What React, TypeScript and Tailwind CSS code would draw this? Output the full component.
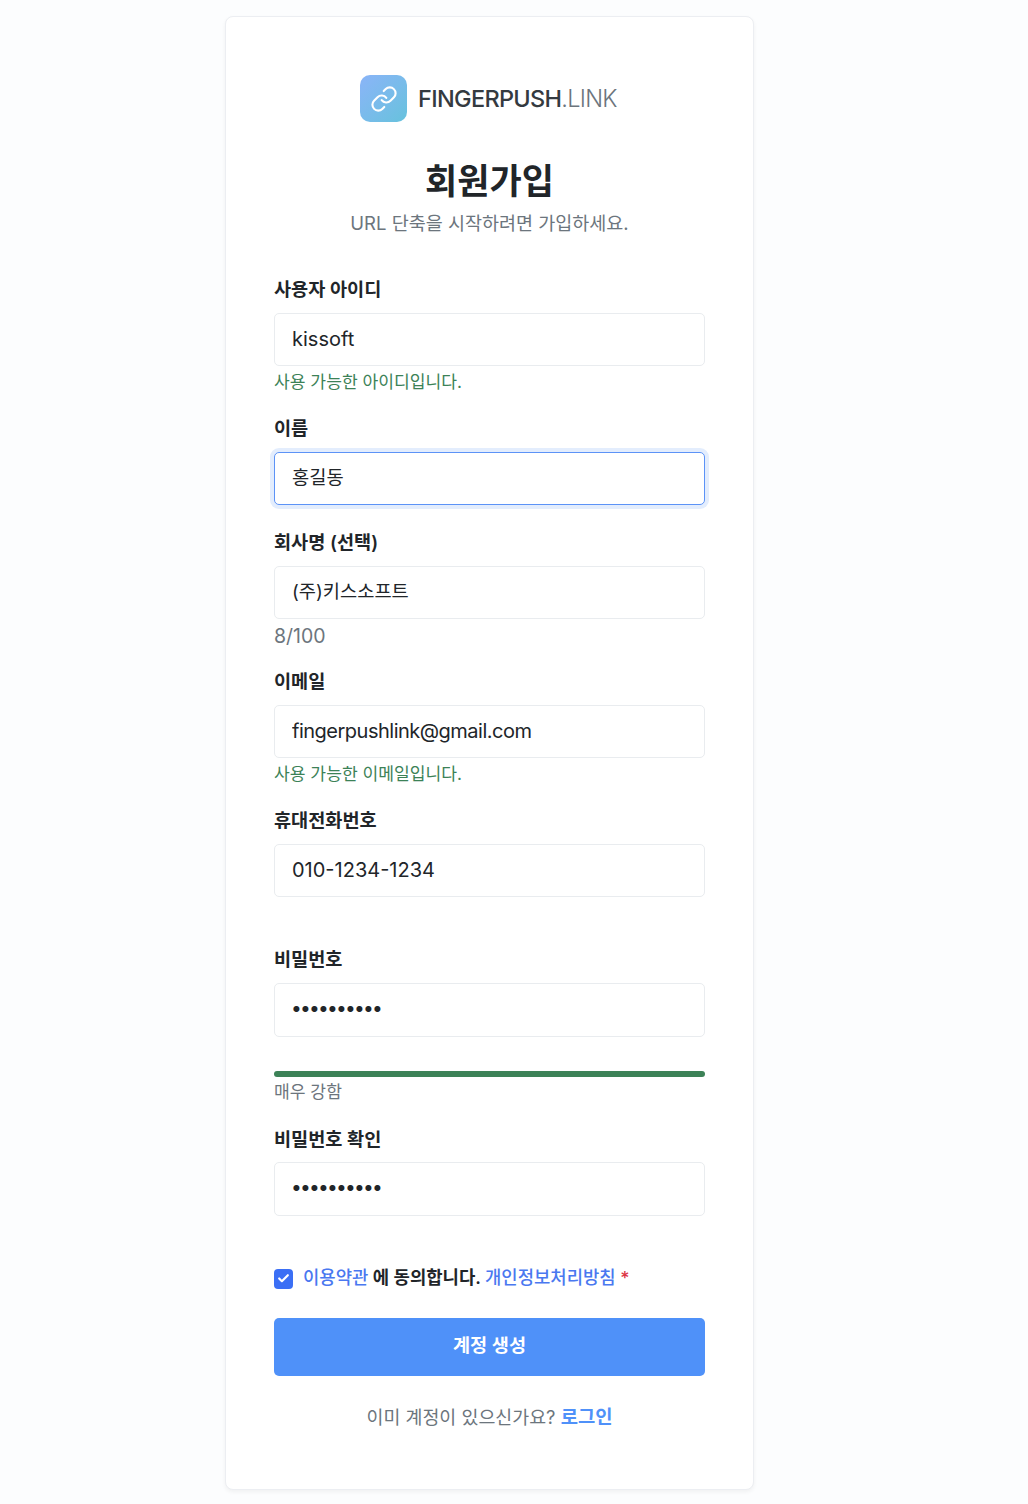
import React from 'react';
import { Check, Link } from 'lucide-react';

const fontStack = "font-['Inter','Noto_Sans_CJK_KR',sans-serif]";

interface FieldProps {
  label: string;
  value: string;
  type?: string;
  focused?: boolean;
  inputClass?: string;
  children?: React.ReactNode;
}

function Field({ label, value, type = 'text', focused, inputClass = 'pb-[2px] text-[20px]', children }: FieldProps) {
  const border = focused ? 'border-[#5c93f7] shadow-[0_0_0_4px_#e3edfd]' : 'border-[#e9ecef]';
  return (
    <div className="mb-[26px]">
      <label className="mb-[12.5px] block text-[18.6px] leading-[22px] font-semibold text-[#212529]">{label}</label>
      <input
        type={type}
        value={value}
        readOnly
        className={`block h-[53.6px] w-full rounded-[5px] border bg-white px-[17px] text-[#212529] outline-none ${border} ${inputClass}`}
      />
      {children}
    </div>
  );
}

function GreenHelp({ text }: { text: string }) {
  return <p className="pt-[6px] text-[17.15px] leading-[19px] text-[#3c8257]">{text}</p>;
}

export default function App() {
  return (
    <div className={`${fontStack} min-h-[1504px] bg-[#fcfdfe] pt-[16px]`}>
      <div className="ml-[225px] h-[1474px] w-[529px] rounded-[8px] border border-[#eceef2] bg-white px-[48px] pt-[58px] shadow-[0_2px_4px_rgba(0,0,0,0.05)]">
        <div className="flex items-center justify-center gap-[11px] pr-[2px]">
          <div className="flex h-[47px] w-[47px] items-center justify-center rounded-[10px] bg-gradient-to-br from-[#8ab4f8] to-[#66c2dd]">
            <Link className="h-[28px] w-[28px] text-white" strokeWidth={1.8} />
          </div>
          <div className="text-[23.5px] font-medium tracking-[-0.7px] text-[#343a40]">
            FINGERPUSH<span className="font-light text-[#6c757d]">.LINK</span>
          </div>
        </div>
        <h1 className="mt-[34px] text-center text-[35px] leading-[50px] font-bold text-[#212529]">회원가입</h1>
        <p className="mt-[3px] mb-[41px] text-center text-[18.5px] leading-[28px] text-[#6c757d]">URL 단축을 시작하려면 가입하세요.</p>

        <Field label="사용자 아이디" value="kissoft" inputClass="text-[20px]">
          <GreenHelp text="사용 가능한 아이디입니다." />
        </Field>
        <Field label="이름" value="홍길동" focused inputClass="pb-[5px] text-[18.7px]" />
        <Field label="회사명 (선택)" value="(주)키스소프트" inputClass="pb-[6px] text-[18.7px]">
          <p className="pt-[9px] text-[19.5px] leading-[16px] text-[#6c757d]">8/100</p>
        </Field>
        <Field label="이메일" value="fingerpushlink@gmail.com" inputClass="pb-[2px] text-[20px] tracking-[-0.5px]">
          <GreenHelp text="사용 가능한 이메일입니다." />
        </Field>
        <Field label="휴대전화번호" value="010-1234-1234">
          <div className="h-[25px]" />
        </Field>
        <Field label="비밀번호" value="••••••••••" type="password" inputClass="pb-[4px] pl-[16px] text-[19.2px] tracking-[-1.8px]">
          <div className="mt-[34.4px] h-[6px] rounded-full bg-[#3c8257]" />
          <p className="pt-[6px] text-[17.15px] leading-[18.6px] text-[#6c757d]">매우 강함</p>
        </Field>
        <Field label="비밀번호 확인" value="••••••••••" type="password" inputClass="pb-[4px] pl-[16px] text-[19.2px] tracking-[-1.8px]" />

        <div className="mt-[50px] flex items-start gap-[10px] text-[17.75px] leading-[24px] font-semibold text-[#212529]">
          <span className="mt-[3px] flex h-[20px] w-[19px] items-center justify-center rounded-[4px] bg-[#3b6ff5]">
            <Check className="h-[13px] w-[13px] text-white" strokeWidth={4} />
          </span>
          <span>
            <span className="font-medium text-[#4a78f0]">이용약관</span> 에 동의합니다. <span className="font-medium text-[#4a78f0]">개인정보처리방침</span>{' '}
            <span className="font-medium text-[#dc3545]">*</span>
          </span>
        </div>

        <button className="mt-[28px] block h-[58px] w-full rounded-[5px] bg-[#4f91f9] pb-[2px] text-[18.6px] font-semibold text-white">계정 생성</button>
        <p className="mt-[27px] text-center text-[18.4px] leading-[28px] text-[#6c757d]">
          이미 계정이 있으신가요? <span className="text-[18.8px] font-semibold text-[#4f91f9]">로그인</span>
        </p>
      </div>
    </div>
  );
}
